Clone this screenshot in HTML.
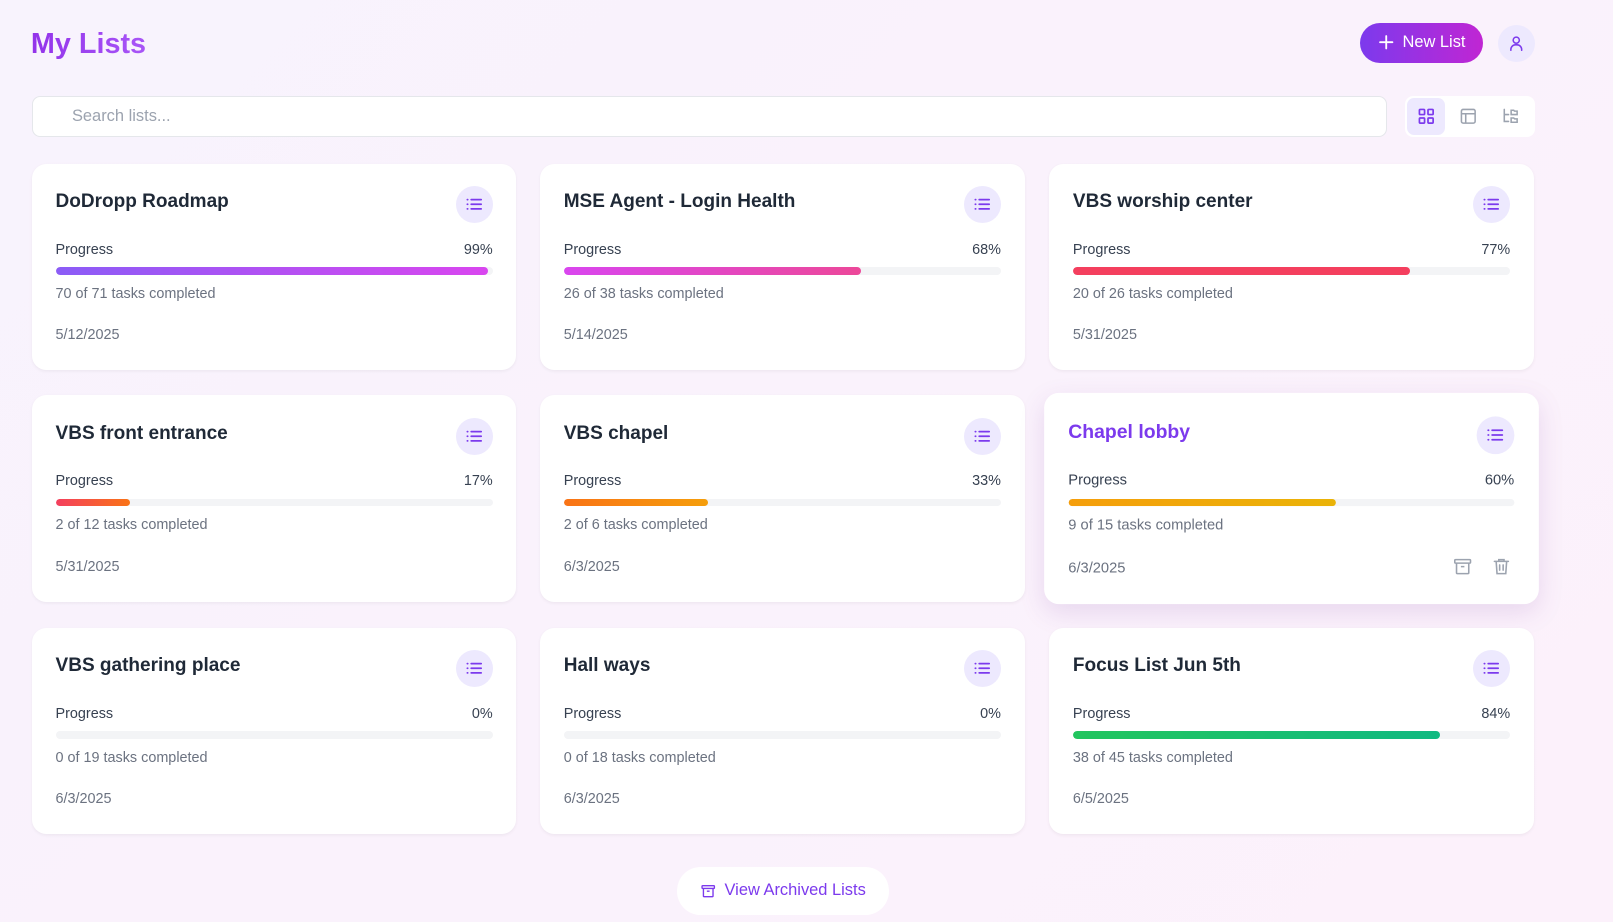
<!DOCTYPE html>
<html><head><meta charset="utf-8"><style>
*{box-sizing:border-box;margin:0;padding:0}
body{width:1613px;height:922px;overflow:hidden;background:linear-gradient(135deg,#f8f3fd,#fcf1fb);font-family:"Liberation Sans",sans-serif;color:#1f2937;position:relative}
#w{position:absolute;left:0;top:0;width:1568px;height:896px;zoom:1.0287}
.title{position:absolute;left:30px;top:27px;font-size:28px;font-weight:bold;background:linear-gradient(90deg,#9333ea,#a855f7);-webkit-background-clip:text;color:transparent}
.newbtn{position:absolute;left:1322px;top:22px;width:120px;height:39px;border-radius:20px;background:linear-gradient(90deg,#7c3aed,#c026d3);color:#fff;font-size:16px;display:flex;align-items:center;justify-content:center;gap:8px}
.avatar{position:absolute;left:1456px;top:24px;width:36px;height:36px;border-radius:50%;background:#ede9fe;display:flex;align-items:center;justify-content:center}
.search{position:absolute;left:31px;top:93px;width:1317px;height:40px;border:1px solid #e5e7eb;border-radius:8px;background:#fff;font-size:16px;color:#9ca3af;padding:10px 38px}
.views{position:absolute;left:1366px;top:93px;width:126px;height:40px;background:#fff;border-radius:8px;display:flex;align-items:center;padding:2px}
.views div{width:38px;height:36px;border-radius:7px;display:flex;align-items:center;justify-content:center;margin-right:4px}
.card{position:absolute;width:471px;height:201px;background:#fff;border-radius:14px;box-shadow:0 1px 3px rgba(0,0,0,.05);padding:0 23px}
.card h3{position:absolute;left:23px;top:27px;font-size:18.5px;font-weight:bold}
.ic{position:absolute;right:23px;top:22px;width:36px;height:36px;border-radius:50%;background:#ede9fe;display:flex;align-items:center;justify-content:center}
.pl{position:absolute;left:23px;right:23px;top:76px;font-size:14px;color:#374151;display:flex;justify-content:space-between}
.bar{position:absolute;left:23px;right:23px;top:101px;height:7px;border-radius:4px;background:#f3f4f6;overflow:hidden}
.bar i{display:block;height:100%;border-radius:4px}
.tk{position:absolute;left:23px;top:119px;font-size:14px;color:#6b7280}
.dt{position:absolute;left:23px;top:159px;font-size:14px;color:#6b7280}
.hov{transform:scale(1.02);box-shadow:0 8px 24px rgba(120,60,160,.15)}
.hov h3{color:#7c3aed}
.arch{position:absolute;left:658px;top:843px;width:206px;height:46px;border-radius:23px;background:#fff;color:#7c3aed;font-size:16px;display:flex;align-items:center;justify-content:center;gap:8px}
</style></head><body><div id="w">
<div class="title">My Lists</div>
<div class="newbtn"><svg width="16" height="16" viewBox="0 0 16 16"><path d="M8 2v12M2 8h12" stroke="#fff" stroke-width="1.8" stroke-linecap="round"/></svg>New List</div>
<div class="avatar"><svg width="18" height="18" viewBox="0 0 24 24" fill="none" stroke="#7c3aed" stroke-width="2" stroke-linecap="round"><circle cx="12" cy="8" r="4"/><path d="M5 21v-1a6 6 0 0 1 6-6h2a6 6 0 0 1 6 6v1"/></svg></div>
<div class="search">Search lists...</div>
<div class="views">
<div style="background:#ede9fe"><svg width="20" height="20" viewBox="0 0 24 24" fill="none" stroke="#7c3aed" stroke-width="2"><rect x="4" y="4" width="6" height="6" rx="1"/><rect x="14" y="4" width="6" height="6" rx="1"/><rect x="4" y="14" width="6" height="6" rx="1"/><rect x="14" y="14" width="6" height="6" rx="1"/></svg></div>
<div><svg width="20" height="20" viewBox="0 0 24 24" fill="none" stroke="#9ca3af" stroke-width="1.8"><rect x="4" y="4" width="16" height="16" rx="2"/><path d="M4 9h16M9 9v11"/></svg></div>
<div><svg width="20" height="20" viewBox="0 0 24 24" fill="none" stroke="#9ca3af" stroke-width="1.8" stroke-linecap="round"><path d="M5 4v14h5M5 10h5"/><path d="M13 5h3l1 1h3v4h-7zM13 14h3l1 1h3v4h-7z"/></svg></div>
</div>
<script>
const cards=[
["DoDropp Roadmap",99,"70 of 71","5/12/2025","linear-gradient(90deg,#8b5cf6,#d946ef)"],
["MSE Agent - Login Health",68,"26 of 38","5/14/2025","linear-gradient(90deg,#d946ef,#ec4899)"],
["VBS worship center",77,"20 of 26","5/31/2025","linear-gradient(90deg,#f43f5e,#f43f5e)"],
["VBS front entrance",17,"2 of 12","5/31/2025","linear-gradient(90deg,#f43f5e,#f97316)"],
["VBS chapel",33,"2 of 6","6/3/2025","linear-gradient(90deg,#f97316,#f59e0b)"],
["Chapel lobby",60,"9 of 15","6/3/2025","linear-gradient(90deg,#f59e0b,#eab308)"],
["VBS gathering place",0,"0 of 19","6/3/2025",""],
["Hall ways",0,"0 of 18","6/3/2025",""],
["Focus List Jun 5th",84,"38 of 45","6/5/2025","linear-gradient(90deg,#22c55e,#10b981)"]];
const xs=[31,525,1020],ys=[159,384,610];
const icon='<svg width="18" height="18" viewBox="0 0 24 24" fill="none" stroke="#7c3aed" stroke-width="2.2" stroke-linecap="round"><path d="M8 6h13M8 12h13M8 18h13M3 6h.5M3 12h.5M3 18h.5"/></svg>';
let h='';
cards.forEach((c,i)=>{const x=xs[i%3],y=ys[Math.floor(i/3)];const hov=i==5;
h+=`<div class="card${hov?' hov':''}" style="left:${x}px;top:${y}px"><h3>${c[0]}</h3><div class="ic">${icon}</div><div class="pl"><span>Progress</span><span>${c[1]}%</span></div><div class="bar"><i style="width:${c[1]}%;background:${c[4]}"></i></div><div class="tk">${c[2]} tasks completed</div><div class="dt">${c[3]}</div>${hov?'<svg style="position:absolute;left:389px;top:156px" width="20" height="20" viewBox="0 0 24 24" fill="none" stroke="#9ca3af" stroke-width="1.8"><rect x="3" y="4" width="18" height="4" rx="1"/><path d="M5 8v11a1 1 0 0 0 1 1h12a1 1 0 0 0 1-1V8M10 12h4"/></svg><svg style="position:absolute;left:426px;top:156px" width="20" height="20" viewBox="0 0 24 24" fill="none" stroke="#9ca3af" stroke-width="1.8" stroke-linecap="round"><path d="M4 6h16M9 6V4h6v2M6 6l1 14h10l1-14M10 10v6M14 10v6"/></svg>':''}</div>`;});
document.write(h);
</script>
<div class="arch"><svg width="16" height="16" viewBox="0 0 24 24" fill="none" stroke="#7c3aed" stroke-width="2"><rect x="3" y="4" width="18" height="4" rx="1"/><path d="M5 8v11a1 1 0 0 0 1 1h12a1 1 0 0 0 1-1V8M10 12h4"/></svg>View Archived Lists</div>
</div></body></html>
